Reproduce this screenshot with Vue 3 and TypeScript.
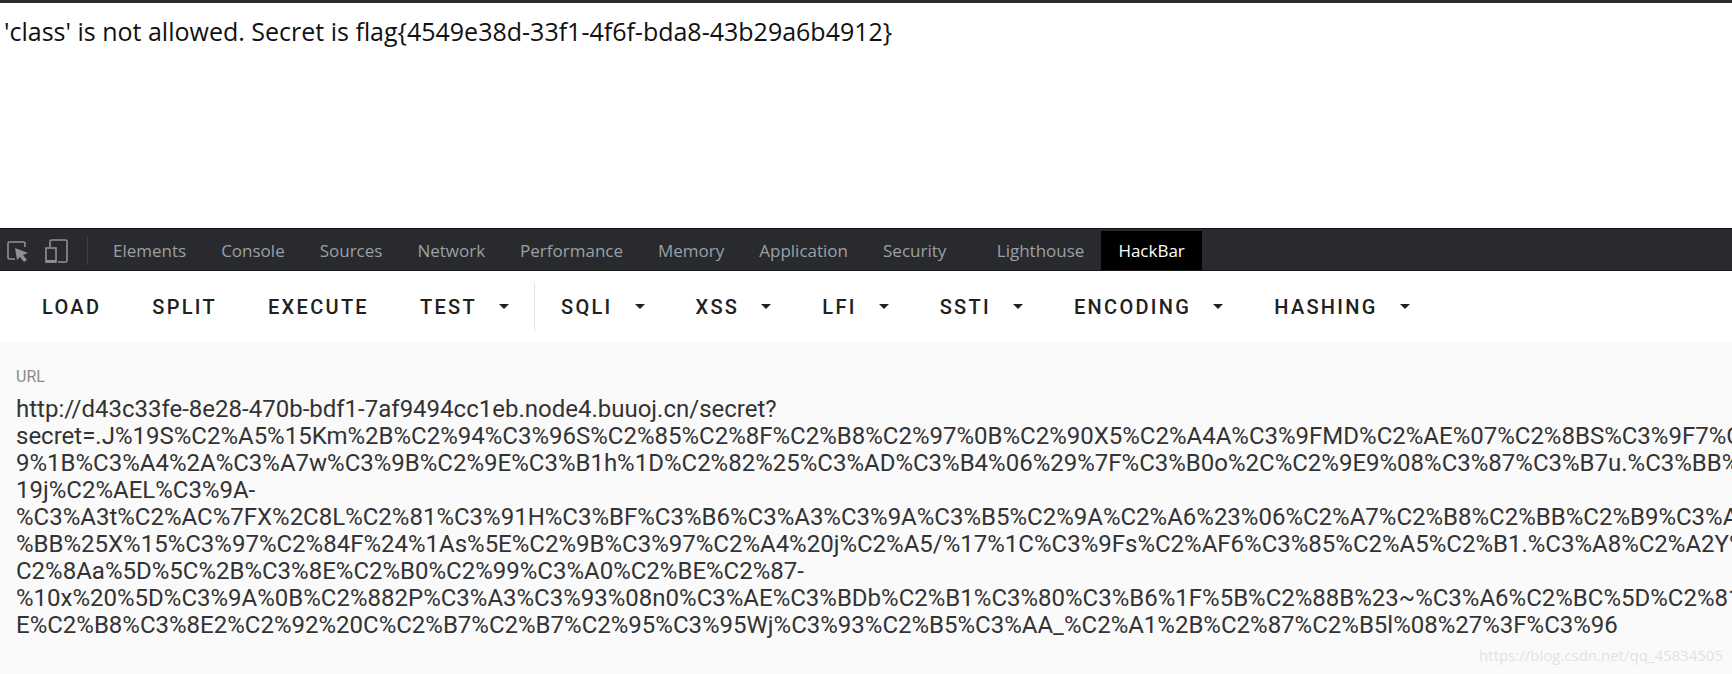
<template>
  <div class="page">
    <div class="content">'class' is not allowed. Secret is flag{4549e38d-33f1-4f6f-bda8-43b29a6b4912}</div>

    <div class="devtools">
      <div class="tools">
        <svg width="24" height="24" viewBox="0 0 24 24" fill="none">
          <path d="M9 20H3.500a1.500 1.500 0 0 1-1.500-1.500V4.500A1.500 1.500 0 0 1 3.500 3h14A1.500 1.500 0 0 1 19 4.500V8" stroke="#8f9193" stroke-width="1.600" />
          <path d="M9 9l13 5-5 2 4 5-3 2-4-5-3 3z" fill="#8f9193" />
        </svg>
        <svg width="24" height="26" viewBox="0 0 24 26" fill="none">
          <path d="M5 9V3.500A1.500 1.500 0 0 1 6.500 2h14A1.500 1.500 0 0 1 22 3.500v19a1.500 1.500 0 0 1-1.500 1.500H13" stroke="#8f9193" stroke-width="1.600" />
          <rect x="1" y="10" width="10" height="14" stroke="#8f9193" stroke-width="1.600" />
          <rect x="1" y="22" width="10" height="2.500" fill="#8f9193" />
        </svg>
        <span class="divider"></span>
      </div>
      <a v-for="tab in tabs" :key="tab" class="tab" :class="{ active: tab === 'HackBar', wide: tab === 'Security' }">{{ tab }}</a>
    </div>

    <div class="toolbar">
      <template v-for="item in menu" :key="item.label">
        <button class="btn">
          {{ item.label }}
          <i v-if="item.caret" class="caret"></i>
        </button>
        <span v-if="item.label === 'TEST'" class="sep"></span>
      </template>
    </div>

    <div class="url-panel">
      <div class="url-label">URL</div>
      <div class="url-text">
        <div v-for="(line, i) in urlLines" :key="i" class="url-line">{{ line }}</div>
      </div>
    </div>

    <div class="watermark">https://blog.csdn.net/qq_45834505</div>
  </div>
</template>

<script setup lang="ts">
interface MenuItem {
  label: string;
  caret: boolean;
}

const tabs: string[] = [
  'Elements', 'Console', 'Sources', 'Network', 'Performance',
  'Memory', 'Application', 'Security', 'Lighthouse', 'HackBar'
];

const menu: MenuItem[] = [
  { label: 'LOAD', caret: false },
  { label: 'SPLIT', caret: false },
  { label: 'EXECUTE', caret: false },
  { label: 'TEST', caret: true },
  { label: 'SQLI', caret: true },
  { label: 'XSS', caret: true },
  { label: 'LFI', caret: true },
  { label: 'SSTI', caret: true },
  { label: 'ENCODING', caret: true },
  { label: 'HASHING', caret: true }
];

const urlLines: string[] = [
  'http://d43c33fe-8e28-470b-bdf1-7af9494cc1eb.node4.buuoj.cn/secret?',
  'secret=.J%19S%C2%A5%15Km%2B%C2%94%C3%96S%C2%85%C2%8F%C2%B8%C2%97%0B%C2%90X5%C2%A4A%C3%9FMD%C2%AE%07%C2%8BS%C3%9F7%C3',
  '9%1B%C3%A4%2A%C3%A7w%C3%9B%C2%9E%C3%B1h%1D%C2%82%25%C3%AD%C3%B4%06%29%7F%C3%B0o%2C%C2%9E9%08%C3%87%C3%B7u.%C3%BB%C2',
  '19j%C2%AEL%C3%9A-',
  '%C3%A3t%C2%AC%7FX%2C8L%C2%81%C3%91H%C3%BF%C3%B6%C3%A3%C3%9A%C3%B5%C2%9A%C2%A6%23%06%C2%A7%C2%B8%C2%BB%C2%B9%C3%A',
  '%BB%25X%15%C3%97%C2%84F%24%1As%5E%C2%9B%C3%97%C2%A4%20j%C2%A5/%17%1C%C3%9Fs%C2%AF6%C3%85%C2%A5%C2%B1.%C3%A8%C2%A2Y%',
  'C2%8Aa%5D%5C%2B%C3%8E%C2%B0%C2%99%C3%A0%C2%BE%C2%87-',
  '%10x%20%5D%C3%9A%0B%C2%882P%C3%A3%C3%93%08n0%C3%AE%C3%BDb%C2%B1%C3%80%C3%B6%1F%5B%C2%88B%23~%C3%A6%C2%BC%5D%C2%81',
  'E%C2%B8%C3%8E2%C2%92%20C%C2%B7%C2%B7%C2%95%C3%95Wj%C3%93%C2%B5%C3%AA_%C2%A1%2B%C2%87%C2%B5l%08%27%3F%C3%96'
];
</script>

<style>
html, body {
  margin: 0;
  background: #fafafa;
  overflow: hidden;
}
</style>

<style scoped>
.page {
  position: relative;
  width: 1732px;
  height: 674px;
  overflow: hidden;
  background: #fafafa;
  font-family: Roboto, sans-serif;
}

.content {
  height: 228px;
  box-sizing: border-box;
  border-top: 3px solid #2b2c2f;
  padding: 12px 0 0 4px;
  background: #fff;
  color: #111;
  font-family: "Open Sans", sans-serif;
  font-size: 25px;
  line-height: 32px;
  white-space: nowrap;
}

.devtools {
  display: flex;
  align-items: stretch;
  height: 43px;
  box-sizing: border-box;
  background: #292a2d;
  border-top: 1px solid #111;
  border-bottom: 1px solid #1a1a1c;
  padding-top: 2px;
}

.tools {
  display: flex;
  align-items: center;
  gap: 15px;
  padding-left: 6px;
  width: 95.500px;
  box-sizing: border-box;
}

.divider {
  width: 1px;
  height: 29px;
  margin-left: 3px;
  background: #3f4043;
}

.tab {
  display: flex;
  align-items: center;
  padding: 0 17.500px;
  color: #9aa0a6;
  font-family: "Open Sans", sans-serif;
  font-size: 17px;
  white-space: nowrap;
}

.tab.wide {
  padding-right: 33px;
}

.tab.active {
  background: #000;
  color: #fff;
  margin-left: -1px;
}

.toolbar {
  display: flex;
  align-items: center;
  height: 71px;
  background: #fff;
  padding-left: 16.500px;
}

.btn {
  display: flex;
  align-items: center;
  height: 50px;
  padding: 0 25.500px;
  border: 0;
  background: none;
  color: #212121;
  font-family: Roboto, sans-serif;
  font-size: 20px;
  font-weight: 500;
  letter-spacing: 2.300px;
  white-space: nowrap;
}

.caret {
  width: 0;
  height: 0;
  margin-left: 22px;
  border-left: 5px solid transparent;
  border-right: 5px solid transparent;
  border-top: 5px solid #212121;
}

.sep {
  width: 1px;
  height: 48px;
  background: #e0e0e0;
}

.url-panel {
  padding: 25px 16px 0;
}

.url-label {
  color: #8a8a8a;
  font-size: 16px;
  line-height: 20px;
}

.url-text {
  margin-top: 9px;
  color: #333;
  font-size: 24px;
  line-height: 27px;
}

.url-line {
  white-space: nowrap;
}

.watermark {
  position: absolute;
  right: 9px;
  bottom: 9px;
  color: #e2e2e2;
  font-family: "Open Sans", sans-serif;
  font-size: 15px;
  white-space: nowrap;
}
</style>
